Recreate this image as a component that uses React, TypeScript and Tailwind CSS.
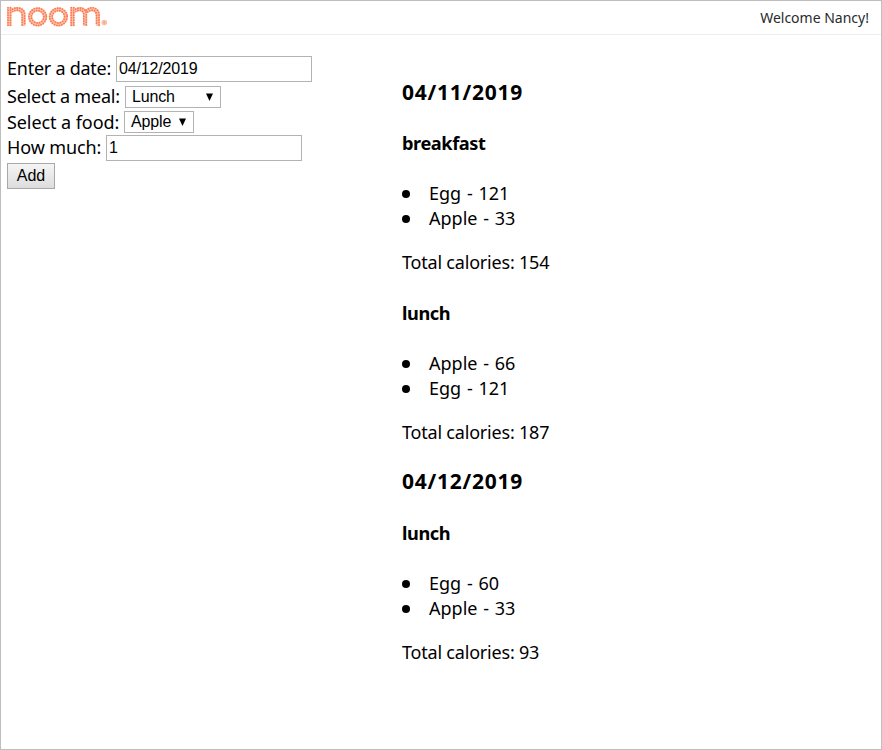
import React from 'react';

function NoomLogo() {
  return (
    <svg width="108" height="30" viewBox="0 0 108 30" className="block" aria-label="noom">
      <g fill="none" stroke="#fdc4b0" strokeWidth="4.2">
        <path d="M9.3 26V7.4" />
        <path d="M12.4 10.3C17.5 7.8 23.5 9 23.5 15.3V26" />
        <circle cx="37.6" cy="16.8" r="7.5" />
        <circle cx="58.4" cy="16.8" r="7.5" />
        <path d="M72.4 26V7.4" />
        <path d="M75.6 10.3C80 7.8 85.1 9.2 85.1 14.5V26" />
        <path d="M87 11.2C91.3 7.2 97.9 9 97.9 15.3V26" />
      </g>
      <g fill="none" stroke="#fb7a50" strokeWidth="1.9" strokeLinecap="round" strokeDasharray="0 2.5">
        <path d="M8 25.2V7.6" />
        <path d="M10.6 25.2V7.6" />
        <path d="M12.4 9.2C18 6.5 24.7 8 24.7 15V25.4" />
        <path d="M12.4 11.6C17 9 22.2 10.2 22.2 15.5V25.4" />
        <circle cx="37.6" cy="16.8" r="8.7" />
        <circle cx="37.6" cy="16.8" r="6.2" />
        <circle cx="58.4" cy="16.8" r="8.7" />
        <circle cx="58.4" cy="16.8" r="6.2" />
        <path d="M71.2 25.2V7.6" />
        <path d="M73.8 25.2V7.6" />
        <path d="M75.6 9.2C80 6.5 86.3 8.2 86.3 14V25.4" />
        <path d="M75.6 11.6C79.5 9 83.8 10.2 83.8 15V25.4" />
        <path d="M86.3 10.3C91 5.5 99 7.8 99 15V25.4" />
        <path d="M87.6 12C91.5 8.5 96.5 10.2 96.5 15.5V25.4" />
      </g>
      <circle cx="104.3" cy="22.6" r="2.8" fill="#fcc0aa" />
      <circle cx="104.3" cy="22.6" r="1.2" fill="#fba88b" />
    </svg>
  );
}

function TextField({ value }: { value: string }) {
  return (
    <input
      readOnly
      value={value}
      className="h-[26px] w-[196px] border border-[#b3b3b3] bg-white px-[2px] font-['Liberation_Sans',sans-serif] text-base tracking-[-0.15px] text-black outline-none"
    />
  );
}

function Picker({ value, className }: { value: string; className: string }) {
  return (
    <div
      className={
        "flex items-center justify-between border border-[#b3b3b3] bg-white pl-[6px] pr-[7px] font-['Liberation_Sans',sans-serif] text-base leading-5 tracking-[-0.15px] " +
        className
      }
    >
      <span>{value}</span>
      <svg width="7" height="8" viewBox="0 0 7 8" className="-mt-px">
        <path d="M0 0.5H7L3.5 8Z" fill="#000" />
      </svg>
    </div>
  );
}

type Meal = { name: string; items: string[]; total: number };

function MealBlock({ meal, className }: { meal: Meal; className: string }) {
  return (
    <section className={className}>
      <h4 className="h-[25px] text-[18.2px] font-bold leading-[25px] tracking-[-0.42px]">{meal.name}</h4>
      <ul className="mt-[25px]">
        {meal.items.map((item) => (
          <li key={item} className="flex h-[25px] items-center gap-[19px]">
            <span className="size-2 rounded-full bg-black" />
            <span className="text-[18px] leading-[25px] [word-spacing:1.1px]">{item}</span>
          </li>
        ))}
      </ul>
      <p className="mt-[19px] h-[25px] text-[18px] leading-[25px] tracking-[-0.2px]">Total calories: {meal.total}</p>
    </section>
  );
}

export default function App() {
  return (
    <div className="h-[750px] w-[882px] overflow-hidden border border-[#bebebe] bg-white font-['Noto_Sans',sans-serif] text-black">
      <header className="flex h-[34px] items-start justify-between border-b border-[#ededed] pr-3">
        <div className="-mt-px -ml-px">
          <NoomLogo />
        </div>
        <span className="mt-[7px] text-sm leading-5 text-[#292b2c]">Welcome Nancy!</span>
      </header>
      <main className="flex text-[18px] leading-[25px]">
        <form className="flex w-[395px] flex-col items-start pl-[6px] pt-[21px]">
          <label className="flex h-[28px] gap-[5px]">
            <span className="w-[104px] whitespace-nowrap tracking-[-0.25px]">Enter a date:</span>
            <TextField value="04/12/2019" />
          </label>
          <label className="flex h-[26px] gap-[5px]">
            <span className="w-[113px] whitespace-nowrap tracking-[-0.23px]">Select a meal:</span>
            <Picker value="Lunch" className="mt-[2px] h-[22px] w-[96px]" />
          </label>
          <label className="flex h-[25px] gap-[5px]">
            <span className="w-[112px] whitespace-nowrap tracking-[-0.08px]">Select a food:</span>
            <Picker value="Apple" className="mt-px h-[22px] w-[70px]" />
          </label>
          <label className="flex h-[28px] gap-[5px]">
            <span className="w-[94px] whitespace-nowrap tracking-[-0.12px]">How much:</span>
            <TextField value="1" />
          </label>
          <button
            type="button"
            className="h-[26px] w-[48px] border border-[#a8a8a8] bg-linear-to-b from-[#f5f5f5] to-[#dddddd] font-['Liberation_Sans',sans-serif] text-base leading-6"
          >
            Add
          </button>
        </form>
        <div className="pl-[6px] pt-[42px]">
          <h3 className="h-[30px] text-[21px] font-bold leading-[30px] tracking-[0.75px]">04/11/2019</h3>
          <MealBlock className="mt-[24px]" meal={{ name: 'breakfast', items: ['Egg - 121', 'Apple - 33'], total: 154 }} />
          <MealBlock className="mt-[26px]" meal={{ name: 'lunch', items: ['Apple - 66', 'Egg - 121'], total: 187 }} />
          <h3 className="mt-[21px] h-[30px] text-[21px] font-bold leading-[30px] tracking-[0.75px]">04/12/2019</h3>
          <MealBlock className="mt-[25px]" meal={{ name: 'lunch', items: ['Egg - 60', 'Apple - 33'], total: 93 }} />
        </div>
      </main>
    </div>
  );
}
